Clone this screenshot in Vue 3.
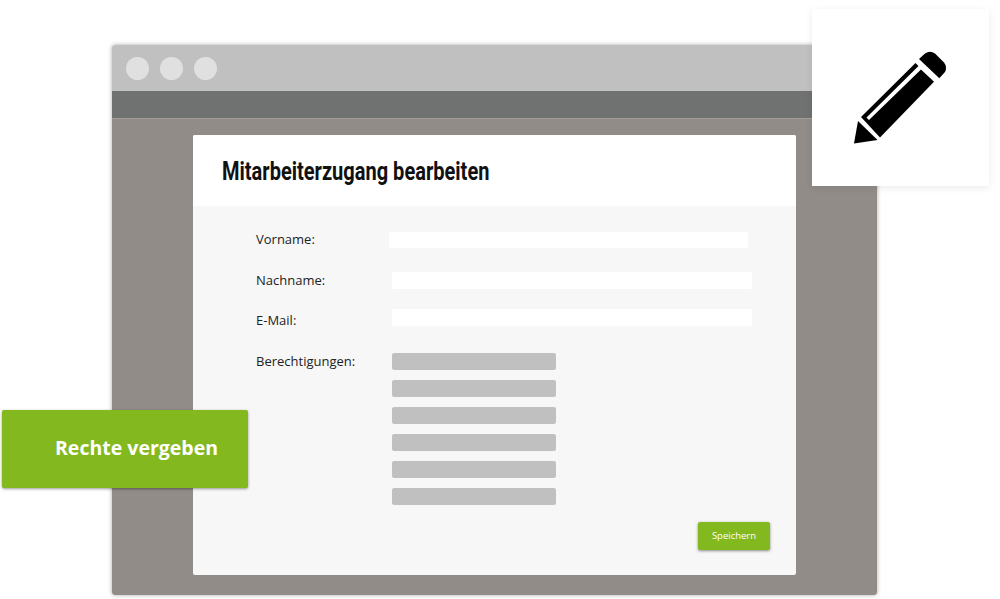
<template>
  <div class="page">
    <div class="window">
      <div class="titlebar">
        <span class="dot"></span>
        <span class="dot"></span>
        <span class="dot"></span>
      </div>
      <div class="toolbar"></div>
      <div class="content">
        <div class="panel">
          <div class="panel-head">
            <h1>Mitarbeiterzugang bearbeiten</h1>
          </div>
          <div class="panel-body">
            <div class="row row-first">
              <label>Vorname:</label>
              <div class="input input-first"></div>
            </div>
            <div class="row row-name">
              <label>Nachname:</label>
              <div class="input"></div>
            </div>
            <div class="row row-mail">
              <label>E-Mail:</label>
              <div class="input"></div>
            </div>
            <div class="row row-rights">
              <label>Berechtigungen:</label>
              <div class="bars">
                <div v-for="n in 6" :key="n" class="bar"></div>
              </div>
            </div>
            <div class="actions">
              <button type="button" class="save">Speichern</button>
            </div>
          </div>
        </div>
      </div>
    </div>

    <div class="badge">Rechte vergeben</div>

    <div class="icon-card">
      <svg width="100" height="102" viewBox="0 0 100 102">
        <path d="M8 76 L27.500 95 L4 98.500 Z" />
        <path d="M11 72 L65.500 18 L68.500 21 L16.500 72.500 L19 75 L71 24.500 L84 36.700 L30 92.500 Z" />
        <path d="M69 14 L75 8.500 Q80 5 85 8.500 L94 17.500 Q97.500 22 95 27 L89.300 33.300 Z" />
      </svg>
    </div>
  </div>
</template>

<script setup>
</script>

<style>
html, body {
  margin: 0;
  background: #fff;
}
</style>

<style scoped>
.page {
  position: relative;
  width: 1000px;
  height: 599px;
  padding: 45px 123px 4px 112px;
  box-sizing: border-box;
  overflow: hidden;
  font-family: "Open Sans", "Noto Sans", sans-serif;
}

.window {
  height: 550px;
  display: flex;
  flex-direction: column;
  border-radius: 3px;
  overflow: hidden;
  box-shadow: 0 0 4px rgba(0, 0, 0, 0.35);
}

.titlebar {
  height: 46px;
  background: #c0c0c0;
  display: flex;
  align-items: center;
  gap: 11px;
  padding-left: 13.5px;
}

.dot {
  width: 23px;
  height: 23px;
  border-radius: 50%;
  background: #e0e0e0;
}

.toolbar {
  height: 27px;
  background: #707271;
}

.content {
  flex: 1;
  background: #918c87;
  border-top: 1px solid #a29e99;
  padding: 16px 81px 20px 81px;
  display: flex;
}

.panel {
  flex: 1;
  display: flex;
  flex-direction: column;
  border-radius: 2px;
  overflow: hidden;
  background: #f7f7f7;
}

.panel-head {
  height: 71px;
  background: #fff;
  display: flex;
  align-items: center;
  padding-left: 29px;
}

h1 {
  margin: 0;
  font-family: "Roboto", sans-serif;
  font-size: 26px;
  font-weight: 700;
  color: #111;
  white-space: nowrap;
  transform: scaleX(0.77);
  transform-origin: left center;
}

.panel-body {
  flex: 1;
  padding-left: 63px;
  padding-right: 44px;
  display: flex;
  flex-direction: column;
}

.row {
  display: flex;
  align-items: center;
}

.row-first {
  margin-top: 25px;
}

.row-name {
  margin-top: 24px;
}

.row-mail {
  margin-top: 20px;
  align-items: flex-start;
}

.row-mail label {
  padding-top: 3px;
}

.row-rights {
  margin-top: 24px;
  align-items: flex-start;
}

label {
  width: 136px;
  flex: none;
  font-size: 13px;
  line-height: 17px;
  color: #222;
}

.input {
  width: 360px;
  height: 17px;
  background: #fff;
  border-radius: 1px;
}

.input-first {
  margin-left: -3px;
  width: 359px;
  height: 16px;
}

.bars {
  display: flex;
  flex-direction: column;
  gap: 10px;
}

.bar {
  width: 164px;
  height: 17px;
  background: #c0c0c0;
  border-radius: 2px;
}

.actions {
  display: flex;
  justify-content: flex-end;
  margin-top: 17px;
  margin-right: -18px;
}

.save {
  width: 72px;
  height: 28px;
  padding: 0 0 2px;
  border: none;
  border-radius: 2px;
  background: #84b81f;
  color: #fff;
  font-family: "Open Sans", sans-serif;
  font-size: 9.5px;
  box-shadow: 0 1px 3px rgba(0, 0, 0, 0.45);
}

.badge {
  position: absolute;
  left: 2px;
  top: 410px;
  width: 246px;
  height: 78px;
  box-sizing: border-box;
  padding: 0 0 3px 53px;
  display: flex;
  align-items: center;
  background: #84b81f;
  border-radius: 2px;
  color: #fff;
  font-size: 19.5px;
  font-weight: 700;
  box-shadow: 0 1px 3px rgba(0, 0, 0, 0.4);
}

.icon-card {
  position: absolute;
  left: 812px;
  top: 9px;
  width: 177px;
  height: 177px;
  background: #fff;
  box-shadow: 0 2px 8px rgba(0, 0, 0, 0.08);
  display: flex;
}

.icon-card svg {
  margin: 36px 0 0 38px;
}
</style>
